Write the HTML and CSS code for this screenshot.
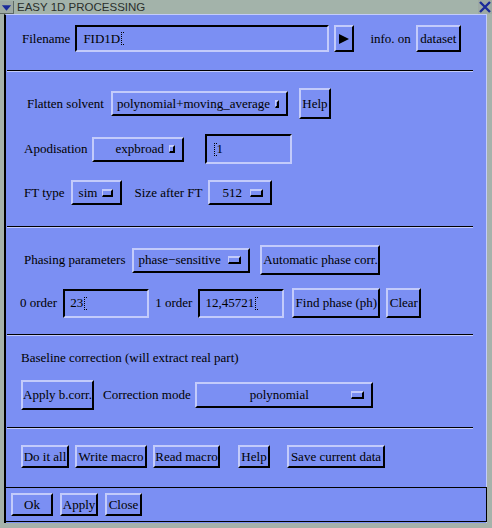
FILE: index.html
```html
<!DOCTYPE html>
<html lang="en">
<head>
    <meta charset="UTF-8">
    <title>EASY 1D PROCESSING</title>
    <link rel="stylesheet" href="styles.css">
</head>
<body>
    <div class="window">
        <div class="titlebar">
            <span class="menu-icon">
                <svg width="14" height="13" viewBox="0 0 14 13"><polygon points="2,4 12,4 7,10" fill="#1a2a9a"/></svg>
            </span>
            <span class="title">EASY 1D PROCESSING</span>
            <span class="close-icon">
                <svg width="12" height="12" viewBox="0 0 12 12"><path d="M1 1 L11 11 M11 1 L1 11" stroke="#1a2a9a" stroke-width="2.4"/></svg>
            </span>
        </div>
        <div class="client">
            <div class="section s-file">
                <div class="row row-file">
                    <span class="label">Filename</span>
                    <span class="field w-file">FID1D<i class="caret"></i></span>
                    <button class="btn arrow">
                        <svg width="12" height="12" viewBox="0 0 12 12"><polygon points="1,1 11,6 1,11" fill="#000"/></svg>
                    </button>
                    <span class="label info">info. on</span>
                    <button class="btn w-dataset">dataset</button>
                </div>
            </div>
            <div class="sep"></div>

            <div class="section s-params">
                <div class="row row-flatten">
                    <span class="label">Flatten solvent</span>
                    <span class="option w-flatten">polynomial+moving_average<i class="ind"></i></span>
                    <button class="btn default w-help">Help</button>
                </div>
                <div class="row row-apod">
                    <span class="label">Apodisation</span>
                    <span class="option w-apod">expbroad<i class="ind"></i></span>
                    <span class="field w-apodval"><i class="caret"></i>1</span>
                </div>
                <div class="row row-ft">
                    <span class="label">FT type</span>
                    <span class="option w-sim">sim<i class="ind"></i></span>
                    <span class="label size-label">Size after FT</span>
                    <span class="option w-size">512<i class="ind"></i></span>
                </div>
            </div>
            <div class="sep"></div>

            <div class="section s-phase">
                <div class="row row-phasing">
                    <span class="label">Phasing parameters</span>
                    <span class="option w-phase">phase&minus;sensitive<i class="ind"></i></span>
                    <button class="btn tall w-auto">Automatic phase corr.</button>
                </div>
                <div class="row row-order">
                    <span class="label">0 order</span>
                    <span class="field w-order">23<i class="caret"></i></span>
                    <span class="label">1 order</span>
                    <span class="field w-order">12,45721<i class="caret"></i></span>
                    <button class="btn tall w-find">Find phase (ph)</button>
                    <button class="btn tall w-clear">Clear</button>
                </div>
            </div>
            <div class="sep"></div>

            <div class="section s-baseline">
                <div class="label heading">Baseline correction (will extract real part)</div>
                <div class="row row-baseline">
                    <button class="btn tall w-apply">Apply b.corr.</button>
                    <span class="label">Correction mode</span>
                    <span class="option centered w-mode"><span class="opt-text">polynomial</span><i class="ind"></i></span>
                </div>
            </div>
            <div class="sep"></div>

            <div class="section s-macro">
                <div class="row row-macro">
                    <button class="btn w-doit">Do it all</button>
                    <button class="btn w-write">Write macro</button>
                    <button class="btn w-read">Read macro</button>
                    <button class="btn w-help2">Help</button>
                    <button class="btn w-save">Save current data</button>
                </div>
            </div>

            <div class="actions">
                <button class="btn w-ok">Ok</button>
                <button class="btn w-applyb">Apply</button>
                <button class="btn w-close">Close</button>
            </div>
        </div>
    </div>
</body>
</html>
```

FILE: styles.css
```css
* {
    margin: 0;
    padding: 0;
    box-sizing: border-box;
}

body {
    width: 492px;
    height: 528px;
    overflow: hidden;
    background-color: #a6b2ab;
    font-family: "Liberation Serif", "Times New Roman", serif;
    font-size: 13px;
    color: #000;
}

.window {
    width: 492px;
    height: 528px;
}

/* title bar */
.titlebar {
    height: 14px;
    display: flex;
    align-items: center;
    background-color: #a3b3aa;
}

.menu-icon {
    width: 14px;
    height: 13px;
    display: flex;
    background-color: #9eaaa4;
    border-right: 1px solid #5e6a64;
    border-bottom: 1px solid #5e6a64;
}

.title {
    flex: 1;
    padding-left: 3px;
    font-family: "Liberation Sans", Arial, sans-serif;
    font-size: 11.5px;
    color: #2a2f2c;
    line-height: 14px;
}

.close-icon {
    width: 14px;
    height: 14px;
    display: flex;
    align-items: center;
    justify-content: center;
    background-color: #9eaaa4;
}

/* main area */
.client {
    margin-left: 4px;
    width: 483px;
    height: 509px;
    background-color: #7b8ff3;
    border-left: 2px solid #000;
    border-top: 1px solid #c3cbfb;
    border-right: 1px solid #c3cbfb;
}

.section {
    display: flex;
    flex-direction: column;
}

.row {
    display: flex;
    align-items: center;
}

.sep {
    margin-left: 1px;
    width: 466px;
    height: 2px;
    border-top: 1px solid #000;
    border-bottom: 1px solid #c3cbfb;
}

.label {
    white-space: nowrap;
    line-height: 16px;
}

/* motif widgets */
.btn {
    font-family: inherit;
    font-size: 13px;
    color: #000;
    background-color: #7b8ff3;
    height: 23px;
    border-style: solid;
    border-width: 2px;
    border-color: #c3cbfb #000 #000 #c3cbfb;
    display: flex;
    align-items: center;
    justify-content: center;
    white-space: nowrap;
    padding: 0;
}

.btn.tall {
    height: 30px;
}

.btn.default {
    height: 31px;
    box-shadow: inset 1px 1px 0 #7b8ff3, inset -1px -1px 0 #7b8ff3;
}

.field {
    height: 29px;
    border-style: solid;
    border-width: 2px;
    border-color: #000 #c3cbfb #c3cbfb #000;
    display: flex;
    align-items: center;
    padding-left: 6px;
    white-space: nowrap;
}

.caret {
    display: inline-block;
    width: 3px;
    height: 13px;
    margin-left: 1px;
    border-left: 1px dotted #000;
    border-top: 1px dotted #000;
    border-bottom: 1px dotted #000;
}

.option {
    height: 25px;
    border-style: solid;
    border-width: 2px;
    border-color: #c3cbfb #000 #000 #c3cbfb;
    display: flex;
    align-items: center;
    justify-content: space-between;
    padding: 0 7px 0 4px;
    white-space: nowrap;
}

.option.centered {
    justify-content: flex-end;
}

.opt-text {
    flex: 1;
    text-align: center;
    padding-left: 12px;
}

.ind {
    display: inline-block;
    width: 13px;
    height: 8px;
    border-style: solid;
    border-width: 2px 2px 2px 1px;
    border-color: #c3cbfb #000 #000 #c3cbfb;
    margin-left: 5px;
}

/* section 1 */
.s-file {
    height: 55px;
    padding: 10px 0 0 16px;
}

.row-file {
    gap: 5px;
}

.w-file {
    width: 254px;
    height: 27px;
}

.arrow {
    width: 20px;
    height: 27px;
}

.info {
    margin-left: 11px;
}

.w-dataset {
    width: 45px;
    height: 27px;
}

/* section 2 */
.s-params {
    height: 154px;
    padding: 16px 0 0 18px;
}

.row-flatten {
    margin-left: 3px;
}

.row-flatten .option {
    margin-left: 7px;
}

.w-flatten {
    width: 177px;
}

.w-help {
    width: 32px;
    margin-left: 11px;
}

.row-apod {
    margin-top: 15px;
    gap: 4px;
}

.w-apod {
    width: 92px;
    padding-left: 22px;
}

.w-apodval {
    width: 87px;
    height: 30px;
    margin-left: 17px;
}

.row-ft {
    margin-top: 16px;
    gap: 6px;
}

.w-sim {
    width: 51px;
    padding-left: 6px;
}

.size-label {
    margin-left: 7px;
}

.w-size {
    width: 64px;
    padding-left: 12px;
}

/* section 3 */
.s-phase {
    height: 106px;
    padding: 17px 0 0 18px;
}

.row-phasing {
    gap: 7px;
}

.w-phase {
    width: 118px;
}

.w-auto {
    width: 120px;
    height: 31px;
    margin-left: 3px;
}

.row-order {
    margin-top: 13px;
    margin-left: -4px;
    gap: 6px;
}

.w-order {
    width: 86px;
    padding-left: 5px;
}

.w-find {
    width: 88px;
    margin-left: 2px;
}

.w-clear {
    width: 35px;
}

/* section 4 */
.s-baseline {
    height: 91px;
    padding: 14px 0 0 15px;
}

.row-baseline {
    margin-top: 14px;
}

.row-baseline .label {
    margin: 0 4px 0 9px;
}

.w-apply {
    width: 73px;
    height: 31px;
}

.w-mode {
    width: 178px;
    height: 26px;
}

/* section 5 */
.s-macro {
    height: 58px;
    padding: 16px 0 0 15px;
}

.row-macro {
    gap: 6px;
}

.w-doit {
    width: 48px;
}

.w-write {
    width: 72px;
}

.w-read {
    width: 67px;
}

.w-help2 {
    width: 32px;
    margin-left: 12px;
}

.w-save {
    width: 98px;
    margin-left: 11px;
}

/* bottom action area */
.actions {
    width: 481px;
    height: 35px;
    border: 1px solid #000;
    border-left: none;
    display: flex;
    align-items: center;
    gap: 7px;
    padding-left: 5px;
}

.w-ok {
    width: 42px;
}

.w-applyb {
    width: 38px;
}

.w-close {
    width: 37px;
}
```
